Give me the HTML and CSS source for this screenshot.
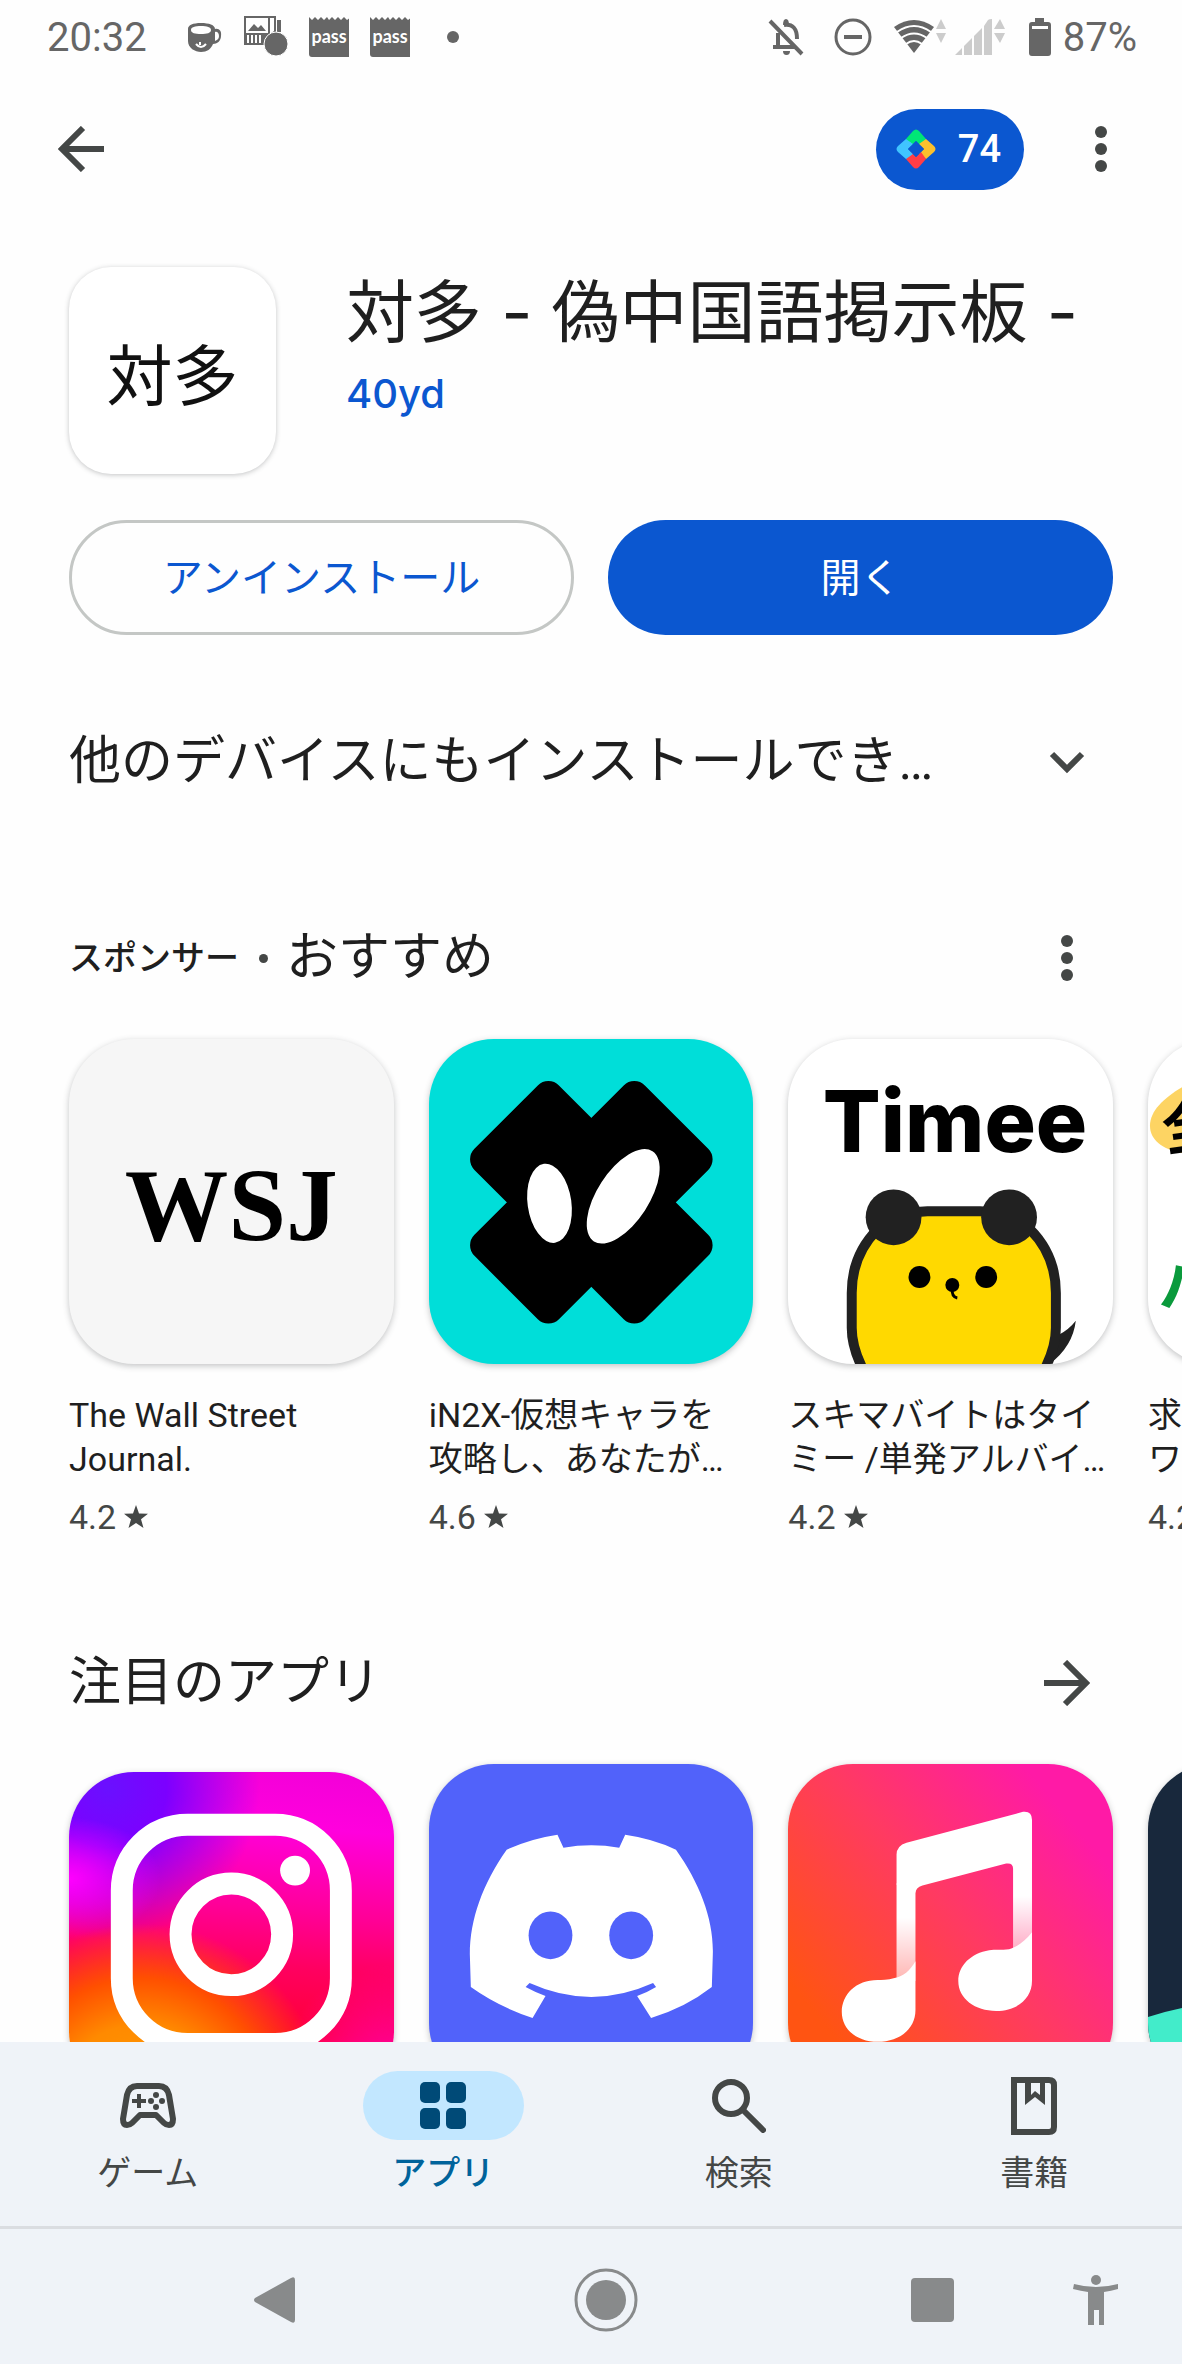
FILE: index.html
```
<!DOCTYPE html>
<html lang="ja">
<head>
    <meta charset="utf-8">
    <title>対多 - 偽中国語掲示板 -</title>
    <meta name="viewport" content="width=device-width, initial-scale=1">
    <link rel="stylesheet" href="styles.css">
</head>
<body>

<div class="status-bar">
    <span class="clock">20:32</span>
    <div class="status-left">
        <svg width="36" height="40" viewBox="0 0 36 40">
            <path fill="#666" fill-rule="evenodd" d="M14 6c8 0 14 2 14 6 4-1 7 2 6 7 0 5-4 8-8 8-2 5-6 8-12 8S1 31 1 24V12c0-4 5-6 13-6zm0 3c-6 0-10 1-10 4s4 4 10 4 10-1 10-4-4-4-10-4zm14 6v9c3-1 4-3 4-5 0-3-2-5-4-4z"/>
            <path d="M9 27q5 6 10 0M13 25v3" fill="none" stroke="#fff" stroke-width="2"/>
        </svg>
        <svg class="icon-album" width="44" height="42" viewBox="0 0 44 42">
            <path fill="#666" fill-rule="evenodd" d="M0 0h32v24l-8 5H0zM2 2v15h22V2zM26 2v16l4-3V2zM3 19v8h2v-8zm4 0v8h2v-8zm4 0v8h2v-8zm4 0v8h2v-8z"/>
            <path fill="#666" d="M4 15l6-7 4 4 3-3 5 6zM33 4h4v12h-4z"/>
            <circle cx="32" cy="28" r="12" fill="#666" stroke="#fff" stroke-width="1"/>
        </svg>
        <svg width="40" height="42" viewBox="0 0 40 42">
            <path fill="#666" d="M0 1l3 3 3-3 3 3 3-3 3 3 3-3 2 3 3-3 3 3 3-3 3 3 3-3 3 3 4-3v37q0 3-3 3H3q-3 0-3-3z"/>
            <text x="20" y="27" class="pass-text">pass</text>
        </svg>
        <svg class="icon-pass" width="40" height="42" viewBox="0 0 40 42">
            <path fill="#666" d="M0 1l3 3 3-3 3 3 3-3 3 3 3-3 2 3 3-3 3 3 3-3 3 3 3-3 3 3 4-3v37q0 3-3 3H3q-3 0-3-3z"/>
            <text x="20" y="27" class="pass-text">pass</text>
        </svg>
        <svg class="icon-dot" width="12" height="12" viewBox="0 0 12 12"><circle cx="6" cy="6" r="6" fill="#666"/></svg>
    </div>
    <div class="status-right">
        <svg width="36" height="38" viewBox="0 0 36 38" fill="none" stroke="#666" stroke-width="4">
            <path d="M2 3l32 33M5 29h22M10 29V15M16 7q13-2 13 14" />
            <path fill="#666" stroke="none" d="M15 7q0-6 3-6t3 6zM15 33h7q0 4-3.500 4t-3.500-4z"/>
        </svg>
        <svg class="icon-dnd" width="38" height="38" viewBox="0 0 38 38" fill="none" stroke="#666">
            <circle cx="19" cy="19" r="17" stroke-width="3"/>
            <path d="M10 19h18" stroke-width="4"/>
        </svg>
        <svg width="54" height="38" viewBox="0 0 54 38">
            <path fill="#666" d="M0 9Q20-5 40 9L20 35z"/>
            <path d="M3 14q17-12 34 0M7 20q13-9 26 0M12 26q8-6 16 0" fill="none" stroke="#fff" stroke-width="2"/>
            <path fill="#ccc" d="M42 11l5-10 5 10zM42 15h10l-5 10z"/>
        </svg>
        <svg width="52" height="38" viewBox="0 0 52 38" fill="#ccc">
            <path d="M0 37l7-7v7zM9 28l8-8v17H9zM19 18l8-8v27h-8zM29 8l4-6q1-1 4-1v36h-8zM39 11l6-10 5 10zM39 15h11l-5 10z"/>
        </svg>
        <svg class="icon-battery" width="22" height="38" viewBox="0 0 22 38">
            <path fill="#666" d="M6 0h9v4h4q3 0 3 3v28q0 3-3 3H3q-3 0-3-3V7q0-3 3-3h3z"/>
            <path fill="#fff" d="M3 8h16v3H3z"/>
        </svg>
        <span class="battery-text">87%</span>
    </div>
</div>

<header class="app-bar">
    <button class="icon-button" aria-label="戻る">
        <svg width="46" height="46" viewBox="0 0 46 46" fill="none" stroke="#444746" stroke-width="6"><path d="M46 23H5M25 2L4 23l21 21"/></svg>
    </button>
    <button class="points">
        <svg width="40" height="40" viewBox="0 0 40 40">
            <path fill="#00e676" d="M10 10l7-8q3-3 6 0l7 8-5 7-5-5-5 5z"/>
            <path fill="#fbc02d" d="M30 10l8 7q3 3 0 6l-8 7-7-5 5-5-5-5z"/>
            <path fill="#ff3d47" d="M30 30l-7 8q-3 3-6 0l-7-8 5-7 5 5 5-5z"/>
            <path fill="#40c4ff" d="M10 30l-8-7q-3-3 0-6l8-7 7 5-5 5 5 5z"/>
            <path fill="#0b57d0" d="M20 12l8 8-8 8-8-8z"/>
        </svg>
        <span>74</span>
    </button>
    <button class="icon-button" aria-label="メニュー">
        <svg width="12" height="46" viewBox="0 0 12 46" fill="#444746"><circle cx="6" cy="6" r="6"/><circle cx="6" cy="23" r="6"/><circle cx="6" cy="40" r="6"/></svg>
    </button>
</header>

<main>
    <section class="app-header">
        <div class="main-icon">対多</div>
        <div class="app-info">
            <h1>対多 - 偽中国語掲示板 -</h1>
            <a href="#" class="developer">40yd</a>
        </div>
    </section>

    <div class="actions">
        <button class="btn btn-outline">アンインストール</button>
        <button class="btn btn-filled">開く</button>
    </div>

    <section class="section-title devices">
        <h2>他のデバイスにもインストールでき…</h2>
        <button class="icon-button" aria-label="展開">
            <svg width="36" height="24" viewBox="0 0 36 24" fill="none" stroke="#444746" stroke-width="6"><path d="M3 4l15 15L33 4"/></svg>
        </button>
    </section>

    <section>
        <div class="section-title">
            <h2><span class="sponsor">スポンサー</span><span class="sep"></span>おすすめ</h2>
            <button class="icon-button" aria-label="その他">
                <svg width="12" height="46" viewBox="0 0 12 46" fill="#444746"><circle cx="6" cy="6" r="6"/><circle cx="6" cy="23" r="6"/><circle cx="6" cy="40" r="6"/></svg>
            </button>
        </div>
        <div class="cards">
            <a href="#" class="card">
                <svg class="card-icon wsj" viewBox="0 0 326 326">
                    <text x="163" y="202" class="wsj-text">WSJ</text>
                </svg>
                <span class="card-name">The Wall Street<br>Journal.</span>
                <span class="rating">4.2 <svg width="24" height="24" viewBox="0 0 24 24"><path fill="#444746" d="M12 0l3 8.500 9 .3-7 5.500 2.500 8.700-7.500-5-7.500 5L7 14.300 0 8.800l9-.3z"/></svg></span>
            </a>
            <a href="#" class="card">
                <svg class="card-icon in2x" viewBox="0 0 326 326">
                    <rect x="103" y="43" width="120" height="242" rx="15" transform="rotate(45 163 164)"/>
                    <rect x="103" y="43" width="120" height="242" rx="15" transform="rotate(-45 163 164)"/>
                    <ellipse cx="121" cy="165" rx="22" ry="40" fill="#fff" transform="rotate(-8 121 165)"/>
                    <ellipse cx="195" cy="158" rx="26" ry="54" fill="#fff" transform="rotate(33 195 158)"/>
                </svg>
                <span class="card-name">iN2X-仮想キャラを<br>攻略し、あなたが…</span>
                <span class="rating">4.6 <svg width="24" height="24" viewBox="0 0 24 24"><path fill="#444746" d="M12 0l3 8.500 9 .3-7 5.500 2.500 8.700-7.500-5-7.500 5L7 14.300 0 8.800l9-.3z"/></svg></span>
            </a>
            <a href="#" class="card">
                <svg class="card-icon" viewBox="0 0 326 326">
                    <text x="35" y="113" class="timee-text">Timee</text>
                    <path fill="#212121" d="M272 297q10-5 17-14-3 26-27 44h-12z"/>
                    <path fill="#ffd900" stroke="#212121" stroke-width="10" d="M80 340C68 320 64 305 64 290v-35c0-26 9-47 26-64q22-17 50-18h53q28 1 50 18c17 17 26 38 26 64v35c0 15-4 30-16 50z"/>
                    <circle cx="106" cy="179" r="28" fill="#212121"/>
                    <circle cx="222" cy="179" r="28" fill="#212121"/>
                    <circle cx="132" cy="239" r="11"/>
                    <circle cx="199" cy="239" r="11"/>
                    <circle cx="165" cy="247" r="7"/>
                    <path d="M165 250q-1 9 5 10" fill="none" stroke="#000" stroke-width="3"/>
                </svg>
                <span class="card-name">スキマバイトはタイ<br>ミー /単発アルバイ…</span>
                <span class="rating">4.2 <svg width="24" height="24" viewBox="0 0 24 24"><path fill="#444746" d="M12 0l3 8.500 9 .3-7 5.500 2.500 8.700-7.500-5-7.500 5L7 14.300 0 8.800l9-.3z"/></svg></span>
            </a>
            <a href="#" class="card">
                <svg class="card-icon" viewBox="0 0 326 326">
                    <path fill="#fdd463" d="M50 40C25 52 2 68 2 87s22 30 60 30z"/>
                    <text x="16" y="112" class="job-text" transform="rotate(-8 20 100)">全</text>
                    <text x="10" y="270" class="job-text green">ハ</text>
                </svg>
                <span class="card-name">求人<br>ワーク</span>
                <span class="rating">4.2 <svg width="24" height="24" viewBox="0 0 24 24"><path fill="#444746" d="M12 0l3 8.500 9 .3-7 5.500 2.500 8.700-7.500-5-7.500 5L7 14.300 0 8.800l9-.3z"/></svg></span>
            </a>
        </div>
    </section>

    <section class="featured">
        <div class="section-title">
            <h2>注目のアプリ</h2>
            <button class="icon-button" aria-label="もっと見る">
                <svg width="46" height="46" viewBox="0 0 46 46" fill="none" stroke="#444746" stroke-width="6"><path d="M0 23h41M21 2l21 21-21 21"/></svg>
            </button>
        </div>
        <div class="cards">
            <a href="#" class="card" aria-label="Instagram">
                <svg class="card-icon instagram" viewBox="0 0 326 326">
                    <rect x="53" y="53" width="220" height="220" rx="66" fill="none" stroke="#fff" stroke-width="22"/>
                    <circle cx="163" cy="163" r="51" fill="none" stroke="#fff" stroke-width="22"/>
                    <circle cx="227" cy="99" r="15" fill="#fff"/>
                </svg>
            </a>
            <a href="#" class="card" aria-label="Discord">
                <svg class="card-icon discord" viewBox="0 0 326 326">
                    <path fill="#fff" d="M129 71l6 13q28-5 56 0l6-13q28 4 51 15c24 34 38 70 37 105l-1 33q-27 21-61 31l-14-22q11-4 19-9l-3-4q-62 28-124 0l-4 4q9 5 20 9l-13 22q-34-11-62-31l-1-33c0-35 13-71 37-105q24-11 51-15z"/>
                    <ellipse cx="122" cy="172" rx="22" ry="24" fill="#5162fa"/>
                    <ellipse cx="203" cy="172" rx="22" ry="24" fill="#5162fa"/>
                </svg>
            </a>
            <a href="#" class="card" aria-label="ミュージック">
                <svg class="card-icon music" viewBox="0 0 326 326">
                    <defs>
                        <linearGradient id="stem" x1="0" y1="0" x2="0" y2="1">
                            <stop offset="0.350" stop-color="#fff"/>
                            <stop offset="1" stop-color="#fff" stop-opacity="0.600"/>
                        </linearGradient>
                    </defs>
                    <path fill="url(#stem)" d="M109 120h19v98h-19z"/>
                    <path fill="url(#stem)" d="M226 104h19v82h-19z"/>
                    <path fill="#fff" d="M109 121V91q0-9 10-12l117-31q9-1 9 8v49h-19q0-6-7-5l-84 22q-7 2-7 8v-1z"/>
                    <path fill="#fff" d="M128 198c-6 10-12 15-21 17-7 2-13 2-17 2-22 0-36 15-36 32 0 18 16 30 36 30 22 0 38-13 38-32z"/>
                    <path fill="#fff" d="M245 169c-7 9-15 15-23 17-8 1-14 0-20 1-18 3-31 15-31 31 0 18 17 30 38 30 23 0 36-14 36-30z"/>
                </svg>
            </a>
            <a href="#" class="card" aria-label="アプリ">
                <svg class="card-icon dark" viewBox="0 0 326 326">
                    <path fill="#42ecca" d="M0 254q30-10 60-13v85H0z"/>
                </svg>
            </a>
        </div>
    </section>
</main>

<nav class="bottom-nav">
    <a href="#">
        <span class="nav-icon"><svg width="60" height="48" viewBox="0 0 60 48">
            <path fill="none" stroke="#444746" stroke-width="6" stroke-linejoin="round" d="M19 4h22q8 0 10 9l4 24q0 6-4 6-3 0-5-2l-8-8H22l-8 8q-2 2-5 2-4 0-4-6L9 13q2-9 10-9z"/>
            <path d="M14 19h14M21 12v14" stroke="#444746" stroke-width="4"/>
            <g fill="#444746"><circle cx="38" cy="13" r="3"/><circle cx="38" cy="25" r="3"/><circle cx="33" cy="19" r="3"/><circle cx="44" cy="19" r="3"/></g>
        </svg></span>
        <span>ゲーム</span>
    </a>
    <a href="#" class="active">
        <span class="nav-icon"><svg width="46" height="48" viewBox="0 0 46 48" fill="#004a77">
            <rect width="20" height="21" rx="5"/><rect x="26" width="20" height="21" rx="5"/>
            <rect y="26" width="20" height="21" rx="5"/><rect x="26" y="26" width="20" height="21" rx="5"/>
        </svg></span>
        <span>アプリ</span>
    </a>
    <a href="#">
        <span class="nav-icon"><svg width="54" height="54" viewBox="0 0 54 54" fill="none" stroke="#444746" stroke-width="6">
            <circle cx="19" cy="19" r="16"/><path d="M31 31l20 20" stroke-linecap="round"/>
        </svg></span>
        <span>検索</span>
    </a>
    <a href="#">
        <span class="nav-icon"><svg width="46" height="58" viewBox="0 0 46 58">
            <path d="M3 3h35q5 0 5 5v42q0 5-5 5H3z" fill="none" stroke="#444746" stroke-width="6"/>
            <path fill="#444746" d="M14 3h20v25l-10-8-10 8zM20 6v12l4-4 5 4V6z" fill-rule="evenodd"/>
        </svg></span>
        <span>書籍</span>
    </a>
</nav>

<div class="system-nav">
    <button aria-label="Back"><svg width="42" height="46" viewBox="0 0 42 46"><path fill="#888a8b" d="M1 21L37 1q4-2 4 2v40q0 4-4 2L1 25q-2-2 0-4z"/></svg></button>
    <button aria-label="Home"><svg width="64" height="64" viewBox="0 0 64 64"><circle cx="32" cy="32" r="30" fill="none" stroke="#888a8b" stroke-width="3"/><circle cx="32" cy="32" r="20" fill="#888a8b"/></svg></button>
    <button aria-label="Recents"><svg width="43" height="44" viewBox="0 0 43 44"><rect width="43" height="44" rx="4" fill="#888a8b"/></svg></button>
    <button aria-label="Accessibility"><svg width="46" height="52" viewBox="0 0 46 52" fill="#888a8b"><circle cx="23" cy="6" r="5"/><path d="M1 10q22 6 44 0v5q-7 2-14 3v33h-5V36h-5v15h-6V18Q8 17 0 15z"/></svg></button>
</div>

</body>
</html>
```

FILE: styles.css
```
* {
    box-sizing: border-box;
}
body {
    margin: 0;
    height: 100vh;
    display: flex;
    flex-direction: column;
    overflow: hidden;
    background: #fefefe;
    color: #1f1f1f;
    font-family: Roboto, "Noto Sans CJK JP", sans-serif;
}
button {
    border: none;
    padding: 0;
    background: none;
    font-family: inherit;
    cursor: pointer;
}
a {
    color: inherit;
    text-decoration: none;
}
svg {
    display: block;
}
h1, h2 {
    margin: 0;
    font-weight: 400;
}

/* status bar */
.status-bar {
    display: flex;
    align-items: center;
    flex-shrink: 0;
    height: 72px;
    padding: 2px 45px 0 47px;
    font-size: 40px;
    color: #666;
}
.status-left {
    display: flex;
    align-items: center;
    margin-left: 40px;
    gap: 21px;
}
.icon-dot {
    margin-left: 16px;
}
.status-right {
    display: flex;
    align-items: center;
    margin-left: auto;
}
.icon-dnd {
    margin: 0 22px 0 30px;
}
.status-right svg + svg + svg + svg {
    margin-left: 7px;
}
.status-right .icon-battery.icon-battery.icon-battery {
    margin: 0 12px 0 22px;
}
.pass-text {
    font-family: Lato, sans-serif;
    font-size: 18px;
    font-weight: 700;
    fill: #fff;
    text-anchor: middle;
}

/* app bar */
.app-bar {
    display: flex;
    align-items: center;
    flex-shrink: 0;
    height: 154px;
    padding: 0 35px;
}
.icon-button {
    display: flex;
    align-items: center;
    justify-content: center;
    flex-shrink: 0;
    width: 92px;
    height: 92px;
}
.points {
    display: flex;
    align-items: center;
    gap: 22px;
    height: 81px;
    margin-left: auto;
    margin-right: 31px;
    padding: 0 23px 0 20px;
    border-radius: 41px;
    background: #0b57d0;
    color: #fff;
    font-size: 38px;
    font-weight: 500;
}

main {
    flex: 1;
    min-height: 0;
    overflow: hidden;
    padding: 41px 69px 0;
}
.app-header {
    display: flex;
    gap: 70px;
}
.main-icon {
    display: flex;
    align-items: center;
    justify-content: center;
    width: 207px;
    height: 207px;
    border-radius: 42px;
    background: #fff;
    box-shadow: 0 1px 5px rgba(60, 64, 67, 0.3);
    font-size: 66px;
    font-weight: 400;
    color: #111;
}
.app-info {
    flex: 1;
    min-width: 0;
    padding-top: 5px;
}
.app-info h1 {
    font-family: Inter, "Noto Sans CJK JP", sans-serif;
    font-size: 68px;
    line-height: 80px;
    white-space: nowrap;
}
.developer {
    display: block;
    margin-top: 14px;
    font-family: Inter, sans-serif;
    font-size: 40px;
    font-weight: 500;
    line-height: 56px;
    color: #0b57d0;
}

.actions {
    display: grid;
    grid-template-columns: 1fr 1fr;
    gap: 34px;
    margin-top: 46px;
}
.btn {
    height: 115px;
    padding-bottom: 6px;
    border-radius: 58px;
    font-size: 40px;
}
.btn-outline {
    border: 3px solid #c4c7c5;
    color: #0b57d0;
}
.btn-filled {
    background: #0b57d0;
    color: #fff;
}

.section-title {
    display: flex;
    align-items: center;
    justify-content: space-between;
    height: 104px;
    margin-top: 92px;
}
.section-title h2 {
    display: flex;
    align-items: center;
    font-size: 52px;
    line-height: 72px;
    white-space: nowrap;
}
.section-title.devices {
    margin-top: 75px;
}
.sponsor {
    font-size: 34px;
    font-weight: 500;
}
.sep {
    width: 9px;
    height: 9px;
    margin: 0 18px 0 20px;
    border-radius: 50%;
    background: #444746;
}

/* card rows run off the right edge */
.cards {
    display: flex;
    gap: 35px;
    margin-top: 29px;
}
.card {
    flex: 0 0 calc((100% - 70px) / 3);
}
.card-icon {
    width: 100%;
    aspect-ratio: 1;
    border-radius: 65px;
    background: #fff;
    box-shadow: 0 2px 6px rgba(60, 64, 67, 0.3);
}
.card-name {
    display: block;
    margin-top: 29px;
    font-size: 34px;
    line-height: 44px;
    white-space: nowrap;
}
.rating {
    display: flex;
    align-items: center;
    gap: 8px;
    margin-top: 14px;
    font-size: 34px;
    line-height: 44px;
    color: #444746;
}
.card-icon.wsj {
    background: #f6f6f6;
}
.wsj-text {
    font-family: "Liberation Serif", serif;
    font-size: 104px;
    font-weight: 700;
    text-anchor: middle;
}
.card-icon.in2x {
    background: #00ded9;
}
.timee-text {
    font-family: Inter, sans-serif;
    font-size: 86px;
    font-weight: 800;
}
.job-text {
    font-family: "Noto Sans CJK JP", sans-serif;
    font-size: 60px;
    font-weight: 700;
}
.job-text.green {
    fill: #0a9a3c;
}
.card-icon.instagram {
    margin-top: 8px;
    background:
        radial-gradient(circle at 22% 104%, #ff9d00 0, #ff8a00 20%, #ff5000 31%, rgba(255, 40, 20, 0) 44%),
        radial-gradient(ellipse at 0 33%, #f0f 0, rgba(255, 0, 255, 0) 20%),
        radial-gradient(circle at 12% 5%, #6a10ff 0, #7c00ff 14%, rgba(150, 0, 255, 0) 36%),
        radial-gradient(circle at 100% 95%, #ff00b0 0, rgba(255, 0, 170, 0) 26%),
        linear-gradient(185deg, #f200d8 0, #f0d 18%, #ff0098 42%, #ff0060 58%, #ff0038 76%);
}
.card-icon.discord {
    background: #5162fa;
}
.card-icon.music {
    background: linear-gradient(50deg, #ff5412 15%, #ff3a62 52%, #ff1aa6 85%);
}
.card-icon.dark {
    background: #18283c;
}

.bottom-nav {
    display: flex;
    flex-shrink: 0;
    padding: 29px 0;
    border-bottom: 3px solid #dadde1;
    background: #eff3f8;
    color: #444746;
    font-size: 34px;
    line-height: 48px;
}
.bottom-nav a {
    flex: 1;
    display: flex;
    flex-direction: column;
    align-items: center;
    gap: 9px;
}
.nav-icon {
    display: flex;
    align-items: center;
    justify-content: center;
    width: 161px;
    height: 69px;
    border-radius: 35px;
}
.active {
    color: #00639b;
    font-weight: 500;
}
.active .nav-icon {
    background: #c2e7ff;
}

.system-nav {
    display: grid;
    grid-template-columns: 296fr 342fr 316fr 165fr;
    justify-items: end;
    align-items: center;
    flex-shrink: 0;
    height: 135px;
    padding: 6px 63px 0 0;
    background: #eff3f8;
}
```
